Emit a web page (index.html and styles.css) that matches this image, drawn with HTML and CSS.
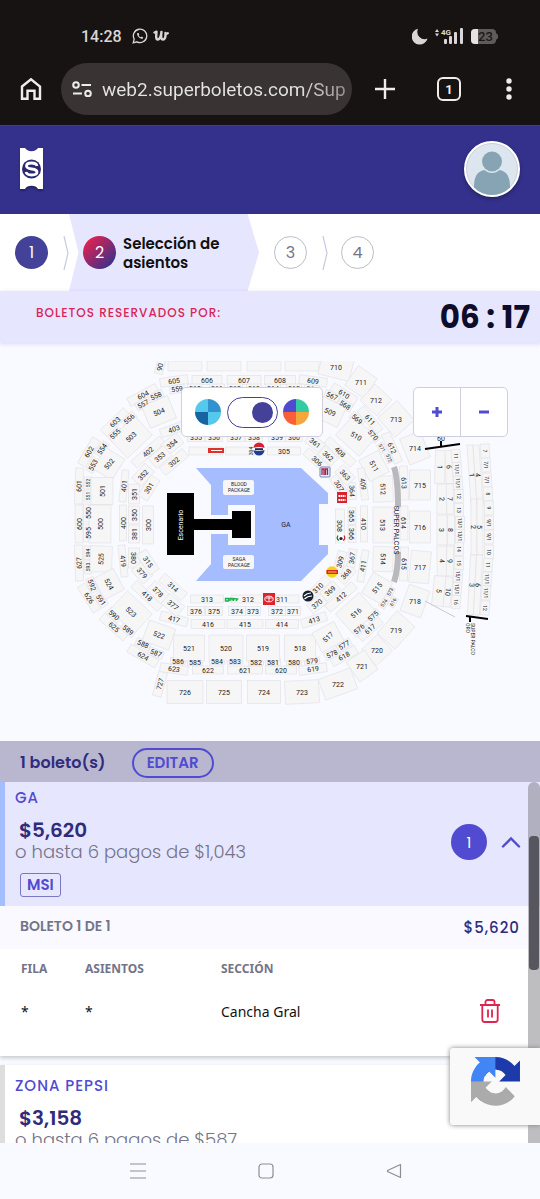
FILE: index.html
```html
<!DOCTYPE html>
<html lang="es">
<head>
  <meta charset="UTF-8" />
  <meta name="viewport" content="width=device-width, initial-scale=1.0"/>
  <title>Superboletos - Selección de asientos</title>
  <link rel="stylesheet" href="styles.css">
</head>
<body>

  <!-- Phone status bar and browser bar -->
  <div class="chrome">
    <div class="status">
      <span class="clock">14:28</span>
      <svg width="16" height="16" viewBox="0 0 16 16" fill="none" stroke="#d8d6d6" stroke-width="1.3">
        <path d="M1.2 14.8l1-3.7A6.7 6.7 0 1 1 5 13.8z"/>
        <path d="M5.3 5c-.5 1.200 0 2.900 1.500 4.300s3.200 1.900 4.100 1.200l.3-1.100-1.500-.8-.8.700c-1-.4-1.900-1.200-2.200-2.100l.6-.8-.7-1.500z" fill="#d8d6d6" stroke="none"/>
      </svg>
      <svg width="16" height="12" viewBox="0 0 16 12" fill="none" stroke="#d8d6d6" stroke-width="2.400" stroke-linecap="round" stroke-linejoin="round">
        <path d="M1.500 2.500l2-.8c-.2 3-1 7.800 1.200 7.800C7 9.500 8 5.500 8.500 2c-.5 3-.8 7.500 1.400 7.500 2.400 0 2.800-3.500 2.600-6.500 .8.800 1.600.8 2.300.2"/>
      </svg>
      <span class="status-right">
        <svg width="16" height="17" viewBox="0 0 16 17"><path d="M6 .8A8 8 0 1 0 15.500 10.500 7.300 7.300 0 0 1 6 .8z" fill="#d8d6d6"/></svg>
        <svg width="29" height="18" viewBox="0 0 29 18" fill="#d8d6d6">
          <path d="M0 5l2-3 2 3zM0 6.500h4l-2 3z"/>
          <text x="6" y="8" class="net">4G</text>
          <rect x="9" y="12" width="3" height="5" rx="1"/><rect x="14" y="9" width="3" height="8" rx="1"/>
          <rect x="19" y="5" width="3" height="12" rx="1"/><rect x="25" y="1" width="3" height="16" rx="1"/>
        </svg>
        <svg width="27" height="15" viewBox="0 0 27 15">
          <rect width="25" height="15" rx="4" fill="#5e5b5b"/><path d="M25 4l2 2v3l-2 2z" fill="#5e5b5b"/>
          <path d="M4 0h3v15H4a4 4 0 0 1-4-4V4a4 4 0 0 1 4-4z" fill="#e4e2e2"/>
          <text x="7" y="12" class="battery">23</text>
        </svg>
      </span>
    </div>
    <div class="browser">
      <button class="icon-btn" aria-label="Inicio">
        <svg width="22" height="24" viewBox="0 0 22 24" fill="none" stroke="#eeecec" stroke-width="2.400"><path d="M2 9.500L11 2.200l9 7.300v12.300h-5.500v-8h-7v8H2z"/></svg>
      </button>
      <div class="url">
        <svg width="20" height="16" viewBox="0 0 20 16" fill="none" stroke="#eeecec" stroke-width="2"><circle cx="4" cy="4" r="2.800"/><path d="M9.500 4H19M1 12.500h9"/><circle cx="16" cy="12.500" r="2.800"/></svg>
        <input type="text" aria-label="Dirección" value="web2.superboletos.com/Sup">
      </div>
      <button class="icon-btn" aria-label="Nueva pestaña">
        <svg width="22" height="22" viewBox="0 0 22 22" stroke="#eeecec" stroke-width="2.400"><path d="M11 1v20M1 11h20"/></svg>
      </button>
      <button class="tabs" aria-label="Pestañas">1</button>
      <button class="icon-btn" aria-label="Menú">
        <svg width="6" height="22" viewBox="0 0 6 22" fill="#eeecec"><circle cx="3" cy="3" r="2.700"/><circle cx="3" cy="11" r="2.700"/><circle cx="3" cy="19" r="2.700"/></svg>
      </button>
    </div>
  </div>

  <header class="header">
    <a href="#" class="logo" aria-label="Superboletos">
      <svg width="24" height="42" viewBox="0 0 24 42">
        <path d="M0 0h5a7 5 0 0 0 13 0h5v41h-5a7 5 0 0 0-13 0H0z" fill="#fff"/>
        <circle cx="11.500" cy="21" r="9.500" fill="#2b2870"/>
        <path d="M17 18c-.5-2.300-2.500-3-5.500-3s-5 1-5 3c0 4.500 10.500 1.500 10.500 6 0 2-2.200 3-5.300 3S6.500 26 6 24" fill="none" stroke="#fff" stroke-width="2.800"/>
      </svg>
    </a>
    <button class="avatar" aria-label="Mi cuenta">
      <svg width="52" height="52" viewBox="0 0 52 52">
        <circle cx="26" cy="26" r="25.500" fill="#dde6ee" stroke="#c9cdd9"/>
        <circle cx="26" cy="18.500" r="10" fill="#87a4b5"/>
        <path d="M8 44.500c0-10 2.500-16 10.500-17.500 4 4 11 4 15 0C41.500 28.500 44 34.500 44 44.500a25.500 25.500 0 0 1-36 0z" fill="#87a4b5"/>
      </svg>
    </button>
  </header>

  <div class="steps">
    <span class="circle done">1</span>
    <svg class="sep" width="6" height="34" viewBox="0 0 6 34"><path d="M1 0l4 17-4 17" fill="none" stroke="#c9c9de" stroke-width="1.200"/></svg>
    <div class="step-active">
      <span class="circle current">2</span>
      <span class="step-label">Selección de asientos</span>
    </div>
    <span class="circle">3</span>
    <svg class="sep" width="6" height="34" viewBox="0 0 6 34"><path d="M1 0l4 17-4 17" fill="none" stroke="#c9c9de" stroke-width="1.200"/></svg>
    <span class="circle">4</span>
  </div>

  <div class="timer">
    <span class="timer-label">BOLETOS RESERVADOS POR:</span>
    <span class="time">06 : 17</span>
  </div>

  <div class="map">
    <svg id="seatMap" viewBox="0 345 540 396"></svg>
    <div class="view-toggle">
      <svg width="26" height="26" viewBox="0 0 26 26"><path d="M13 13V0A13 13 0 0 0 0 13zM13 13v13a13 13 0 0 0 13-13z" fill="#55c8ee"/><path d="M13 13h13A13 13 0 0 0 13 0z" fill="#3093cf"/><path d="M13 13H0a13 13 0 0 0 13 13z" fill="#1664a0"/></svg>
      <input type="checkbox" class="switch" aria-label="Cambiar colores del mapa" checked>
      <svg width="26" height="26" viewBox="0 0 26 26"><path d="M13 13V0A13 13 0 0 0 0 13z" fill="#4f4ace"/><path d="M13 13h13A13 13 0 0 0 13 0z" fill="#34cba4"/><path d="M13 13v13a13 13 0 0 0 13-13z" fill="#f5a73c"/><path d="M13 13H0a13 13 0 0 0 13 13z" fill="#fa6038"/></svg>
    </div>
    <div class="zoom">
      <button aria-label="Acercar"><svg width="12" height="12" viewBox="0 0 12 12"><path d="M6 1v10M1 6h10" stroke="#504bd0" stroke-width="3"/></svg></button>
      <button aria-label="Alejar"><svg width="12" height="12" viewBox="0 0 12 12"><path d="M1 6h10" stroke="#504bd0" stroke-width="3"/></svg></button>
    </div>
  </div>

  <div class="cart-bar">
    <strong>1 boleto(s)</strong>
    <button class="edit">EDITAR</button>
  </div>

  <div class="list-wrap">
    <div class="list">
      <section class="zone open">
        <div class="zone-head">
          <div class="zone-info">
            <h2>GA</h2>
            <p class="price">$5,620</p>
            <p class="pays">o hasta 6 pagos de $1,043</p>
            <span class="msi">MSI</span>
          </div>
          <span class="count">1</span>
          <button class="collapse" aria-label="Ocultar">
            <svg width="20" height="12" viewBox="0 0 20 12"><path d="M2 10.500l8-8 8 8" fill="none" stroke="#504bd0" stroke-width="2.400" stroke-linecap="round"/></svg>
          </button>
        </div>
        <div class="ticket-head">
          <span class="ticket-num">BOLETO 1 DE 1</span>
          <span class="ticket-price">$5,620</span>
        </div>
        <table>
          <tr><th>FILA</th><th>ASIENTOS</th><th>SECCIÓN</th><th></th></tr>
          <tr>
            <td>*</td><td>*</td><td>Cancha Gral</td>
            <td class="del">
              <button aria-label="Eliminar">
                <svg width="20" height="24" viewBox="0 0 20 24" fill="none" stroke="#e0244f" stroke-width="1.800"><path d="M0 6h20M2.300 6v14.500a2.500 2.500 0 0 0 2.500 2.500h10.400a2.500 2.500 0 0 0 2.500-2.500V6M5.500 6V3A2 2 0 0 1 7.500 1h5a2 2 0 0 1 2 2v3M8 10.500v8M12 10.500v8"/></svg>
              </button>
            </td>
          </tr>
        </table>
      </section>
      <section class="zone">
        <div class="zone-head">
          <div class="zone-info">
            <h2>ZONA PEPSI</h2>
            <p class="price">$3,158</p>
            <p class="pays">o hasta 6 pagos de $587</p>
          </div>
        </div>
      </section>
    </div>
    <div class="scrollbar"><div class="thumb"></div></div>
    <div class="captcha">
      <svg width="49" height="49" viewBox="0 0 64 64">
        <path fill="#1c3aa9" d="M64 31.955l-.033-1.370V4.687l-7.160 7.160C50.900 4.674 42.033.093 32.097.093c-10.340 0-19.524 4.960-25.290 12.637l11.736 11.860a15.550 15.550 0 0 1 4.754-5.334c2.050-1.600 4.952-2.906 8.800-2.906.465 0 .824.054 1.087.157a15.530 15.530 0 0 1 11.945 7.164l-8.307 8.307L64 31.953"/>
        <path fill="#4285f4" d="M31.862.094l-1.370.033H4.594l7.160 7.160C4.580 13.147 0 22.014 0 31.950c0 10.340 4.960 19.524 12.637 25.290l11.860-11.736a15.550 15.550 0 0 1-5.334-4.754c-1.600-2.050-2.906-4.952-2.906-8.800 0-.465.054-.824.157-1.087a15.530 15.530 0 0 1 7.164-11.945l8.307 8.307L31.860.095"/>
        <path fill="#ababab" d="M.001 31.955l.033 1.370v25.898l7.160-7.160c5.860 7.173 14.727 11.754 24.664 11.754 10.340 0 19.524-4.960 25.290-12.637l-11.736-11.860a15.550 15.550 0 0 1-4.754 5.334c-2.050 1.600-4.952 2.906-8.800 2.906-.465 0-.824-.054-1.087-.157a15.530 15.530 0 0 1-11.945-7.164l8.307-8.307L0 31.957"/>
      </svg>
    </div>
  </div>

  <nav class="phone-nav">
    <button aria-label="Recientes"><svg width="16" height="16" viewBox="0 0 16 16" fill="none" stroke="#8d8d95" stroke-width="1.200"><path d="M0 1h16M0 8h16M0 15h16"/></svg></button>
    <button aria-label="Inicio del teléfono"><svg width="16" height="16" viewBox="0 0 16 16" fill="none" stroke="#8d8d95" stroke-width="1.200"><rect x="1" y="1" width="14" height="14" rx="3"/></svg></button>
    <button aria-label="Atrás"><svg width="16" height="16" viewBox="0 0 16 16" fill="none" stroke="#8d8d95" stroke-width="1.200" stroke-linejoin="round"><path d="M14.500 1.500v13L1.500 8.500V7.500z"/></svg></button>
  </nav>

  <script src="map.js"></script>
</body>
</html>
```
FILE: styles.css
```css
:root {
  --brand: #34318c;
  --accent: #504bd0;
  --lilac: #e6e6ff;
  --page: #f9faff;
  --gray: #747489;
  --pink: #dc2458;
}
* {
  box-sizing: border-box;
}
body {
  margin: 0;
  height: 100vh;
  display: flex;
  flex-direction: column;
  font-family: 'Poppins', 'Inter', sans-serif;
  background: var(--page);
  color: #111;
}
button {
  padding: 0;
  border: none;
  background: none;
  font-family: inherit;
  cursor: pointer;
}
svg {
  display: block;
  flex-shrink: 0;
}

/* phone and browser bars */
.chrome {
  background: #171312;
  border-bottom: 1px solid #4a4646;
  padding: 24px 20px 10px;
  font-family: Roboto, sans-serif;
}
.status {
  display: flex;
  align-items: center;
  gap: 5px;
  height: 24px;
  padding: 0 22px 0 61px;
}
.clock {
  font-size: 16px;
  font-weight: 500;
  color: #d8d6d6;
  margin-right: 5px;
}
.status-right {
  display: flex;
  align-items: center;
  gap: 7px;
  margin-left: auto;
}
.net {
  font-size: 8px;
  font-weight: 700;
}
.battery {
  font-size: 13px;
  font-weight: 500;
  fill: #1c1818;
}
.browser {
  display: flex;
  align-items: center;
  margin-top: 15px;
  padding-right: 8px;
}
.url {
  flex: 1;
  min-width: 0;
  display: flex;
  align-items: center;
  gap: 10px;
  height: 52px;
  margin: 0 22px 0 19px;
  padding: 0 4px 0 11px;
  border-radius: 26px;
  background: #393433;
}
.url input {
  flex: 1;
  min-width: 0;
  padding: 0;
  border: none;
  outline: none;
  font-family: Roboto, sans-serif;
  font-size: 19px;
  color: transparent;
  background: linear-gradient(90deg, #e6e4e4 80%, #8e8a89);
  background-clip: text;
  -webkit-background-clip: text;
}
.icon-btn, .tabs {
  flex-shrink: 0;
}
.tabs {
  width: 24px;
  height: 24px;
  margin: 0 45px 0 41px;
  border: 2px solid #eeecec;
  border-radius: 6px;
  font-family: Roboto, sans-serif;
  font-size: 13px;
  font-weight: 700;
  color: #eeecec;
}

.header {
  display: flex;
  align-items: center;
  justify-content: space-between;
  height: 88px;
  padding: 0 20px 2px;
  background: var(--brand);
}
.logo svg {
  filter: drop-shadow(0 2px 1px rgba(0, 0, 0, 0.3));
}
.avatar {
  border: 2px solid #fff;
  border-radius: 50%;
  background: #fff;
  box-shadow: 0 2px 4px rgba(0, 0, 0, 0.3);
}

/* steps */
.steps {
  display: flex;
  align-items: center;
  height: 77px;
  padding-left: 15px;
  background: #fff;
}
.circle {
  display: flex;
  align-items: center;
  justify-content: center;
  width: 33px;
  height: 33px;
  border: 1px solid #bcbccd;
  border-radius: 50%;
  font-size: 16px;
  color: var(--gray);
}
.circle.done {
  border: none;
  background: #444199;
  color: #fff;
}
.circle.current {
  border: none;
  background: linear-gradient(135deg, #e8214f 10%, #34318c 90%);
  color: #fff;
}
.sep {
  margin: 0 13px 0 15px;
}
.done + .sep {
  margin-right: 0;
}
.step-active {
  display: flex;
  align-items: center;
  gap: 7px;
  width: 190px;
  height: 100%;
  margin-right: 15px;
  padding: 0 24px 0 14px;
  background: var(--lilac);
  clip-path: polygon(0 0, 94% 0, 100% 50%, 94% 100%, 0 100%, 5% 50%);
}
.step-active .circle {
  flex-shrink: 0;
}
.step-label {
  font-size: 15px;
  line-height: 19px;
  font-weight: 600;
}

.timer {
  position: relative;
  z-index: 1;
  display: flex;
  align-items: center;
  justify-content: space-between;
  height: 52px;
  padding: 0 10px 0 36px;
  background: var(--lilac);
  box-shadow: 0 1px 4px rgba(80, 75, 208, 0.2);
}
.timer-label {
  padding-bottom: 8px;
  font-size: 12px;
  font-weight: 500;
  letter-spacing: 1px;
  color: var(--pink);
}
.time {
  font-size: 31px;
  font-weight: 700;
  color: #0e0c2b;
}

/* seat map */
.map {
  position: relative;
  padding-top: 2px;
}
#seatMap {
  width: 100%;
  font-family: Roboto, sans-serif;
}
.seat {
  fill: #f6f6f7;
  stroke: #dfdfe5;
  stroke-width: 0.6;
}
.label {
  font-size: 7px;
  fill: #222;
  text-anchor: middle;
}
.label.small {
  font-size: 5px;
}
.label.light {
  fill: #fff;
}
.view-toggle, .zoom {
  position: absolute;
  top: 44px;
  height: 50px;
  display: flex;
  background: #fff;
  border: 1px solid #cfcfdf;
  border-radius: 5px;
}
.view-toggle {
  left: 50%;
  width: 142px;
  margin-left: -89px;
  align-items: center;
  justify-content: space-between;
  padding: 0 13px;
}
.switch {
  appearance: none;
  width: 51px;
  height: 31px;
  margin: 0;
  padding: 4px;
  border: 1px solid #444199;
  border-radius: 16px;
  background: #fff;
  cursor: pointer;
}
.switch::before {
  content: '';
  display: block;
  width: 21px;
  height: 21px;
  border-radius: 50%;
  background: #444199;
}
.switch:checked::before {
  margin-left: auto;
}
.zoom {
  right: 32px;
  width: 95px;
}
.zoom button {
  flex: 1;
  display: flex;
  align-items: center;
  justify-content: center;
}
.zoom button + button {
  border-left: 1px solid #cfcfdf;
}

/* cart */
.cart-bar {
  display: flex;
  align-items: center;
  gap: 26px;
  height: 41px;
  padding: 2px 20px 0;
  background: #b8b7cf;
}
.cart-bar strong {
  font-size: 16px;
  font-weight: 600;
  color: #2f2c7c;
}
.edit {
  height: 30px;
  padding: 0 13px;
  border: 2px solid var(--accent);
  border-radius: 15px;
  font-size: 15px;
  font-weight: 600;
  color: var(--accent);
}
.list-wrap {
  position: relative;
  flex: 1;
  min-height: 0;
}
.list {
  height: 100%;
  overflow: hidden;
}
.zone {
  margin-bottom: 9px;
  background: #fff;
  box-shadow: 0 2px 4px rgba(0, 0, 0, 0.2);
}
.zone-head {
  display: flex;
  align-items: center;
  padding: 10px 19px 9px 10px;
  border-left: 5px solid #dedede;
}
.open .zone-head {
  padding-top: 5px;
  border-left-color: #a4bdfd;
  background: var(--lilac);
}
.zone-info {
  flex: 1;
}
.zone h2 {
  margin: 0 0 9px;
  font-size: 15px;
  line-height: 22px;
  font-weight: 500;
  letter-spacing: 1px;
  color: var(--accent);
}
.zone p {
  margin: 0;
}
.price {
  padding-left: 4px;
  font-size: 20px;
  line-height: 24px;
  font-weight: 600;
  color: #2f2c7c;
}
.pays {
  font-size: 18px;
  line-height: 20px;
  font-weight: 300;
  color: var(--gray);
}
.msi {
  display: inline-block;
  margin: 11px 0 0 5px;
  padding: 0 6px;
  border: 1px solid #7a77c4;
  border-radius: 3px;
  font-size: 15px;
  line-height: 22px;
  font-weight: 600;
  color: var(--accent);
}
.count {
  display: flex;
  align-items: center;
  justify-content: center;
  width: 36px;
  height: 36px;
  margin-right: 14px;
  border-radius: 50%;
  background: var(--accent);
  font-size: 15px;
  color: #fff;
}
.ticket-head {
  display: flex;
  align-items: center;
  justify-content: space-between;
  height: 43px;
  padding: 0 20px;
  background: #f9f9ff;
}
.ticket-num {
  padding-bottom: 3px;
  font-size: 14px;
  font-weight: 600;
  color: var(--gray);
}
.ticket-price {
  font-size: 15px;
  font-weight: 500;
  letter-spacing: 1px;
  color: #2f2c7c;
}
table {
  width: 100%;
  border-collapse: collapse;
  font-family: 'Noto Sans', sans-serif;
  text-align: left;
}
th, td {
  padding: 0;
}
th {
  height: 38px;
  font-size: 12px;
  font-weight: 700;
  color: var(--gray);
}
td {
  height: 69px;
  padding-bottom: 21px;
  font-size: 14px;
}
tr > :first-child {
  width: 85px;
  padding-left: 21px;
}
tr > :nth-child(2) {
  width: 136px;
}
.del {
  padding-right: 40px;
}
.del button {
  display: block;
  margin-left: auto;
}
.scrollbar {
  position: absolute;
  top: 0;
  right: 0;
  bottom: 0;
  width: 12px;
  padding-top: 54px;
  border-radius: 6px 6px 0 0;
  background: rgba(110, 110, 118, 0.45);
}
.thumb {
  width: 10px;
  height: 134px;
  margin: 0 auto;
  border-radius: 4px;
  background: #57565e;
}
.captcha {
  position: absolute;
  right: 0;
  bottom: 18px;
  width: 90px;
  height: 77px;
  padding: 9px 0 0 21px;
  border-radius: 3px 0 0 3px;
  background: #f9f9f9;
  box-shadow: 0 0 5px #808080;
}

.phone-nav {
  position: relative;
  display: flex;
  align-items: center;
  justify-content: center;
  gap: 112px;
  height: 56px;
  padding-right: 9px;
  background: var(--page);
}
```
FILE: map.js
```js
// label, x, y, box width, box height, box angle, text angle (same as the box if left out)
const sections = [
  // level 700
  ['90', 160, 367, 14, 8, -75, -80], ['', 185, 366, 34, 10, 0], ['', 224, 366, 34, 10, 0], ['', 264, 366, 34, 10, 0], ['', 302, 366, 34, 10, 0],
  ['710', 336, 367, 32, 22, 14, 0], ['711', 361, 382, 23, 24, 35, 0], ['712', 376, 400, 23, 22, 43, 0],
  ['713', 396, 419, 26, 26, 48, 0], ['714', 415, 448, 28, 22, 68, 0], ['715', 420, 485, 30, 21, 90, 0],
  ['716', 420, 527, 32, 21, 90, 0], ['717', 420, 567, 32, 20, 95, 0], ['718', 415, 601, 28, 22, -70, 0],
  ['719', 396, 630, 30, 24, -48, 0], ['720', 377, 650, 22, 22, -43, 0], ['721', 362, 666, 22, 24, -35, 0],
  ['722', 338, 684, 34, 22, -20, 0], ['723', 302, 692, 34, 23, -3, 0], ['724', 264, 692, 33, 23, 0],
  ['725', 224, 692, 35, 23, 0], ['726', 185, 692, 36, 23, 0], ['727', 160, 684, 25, 9, -75],
  // level 600
  ['605', 174, 381, 28, 9, -8], ['606', 207, 380, 30, 9, 0], ['607', 244, 380, 34, 9, 0], ['608', 280, 380, 31, 9, 0],
  ['609', 313, 381, 28, 9, 8], ['610', 344, 394, 28, 9, 32], ['611', 370, 420, 30, 9, 50], ['612', 392, 448, 32, 9, 66],
  ['613', 404, 483, 34, 8, 88], ['614', 404, 523, 34, 8, 90], ['615', 404, 564, 34, 8, 92],
  ['604', 143, 395, 32, 9, -28], ['603', 115, 422, 32, 9, -44], ['602', 89, 452, 30, 9, -60], ['601', 79, 486, 36, 8, -88],
  ['600', 79, 524, 38, 8, -90], ['627', 79, 563, 36, 8, -92], ['626', 89, 598, 30, 9, 58], ['625', 114, 627, 32, 9, 42],
  ['624', 143, 656, 32, 9, 30], ['623', 174, 669, 28, 9, 8], ['622', 208, 670, 31, 8, 0], ['621', 245, 670, 35, 8, 0],
  ['620', 281, 670, 31, 8, 0], ['619', 313, 669, 28, 9, -8], ['618', 344, 656, 28, 9, -28], ['617', 370, 629, 28, 9, -42],
  // boxes 550 - 595
  ['560', 195, 388, 15, 8, 0], ['561', 217, 388, 15, 8, 0], ['562', 235, 388, 15, 8, 0], ['563', 254, 388, 15, 8, 0],
  ['564', 273, 388, 15, 8, 0], ['565', 294, 388, 15, 8, 0], ['566', 312, 389, 15, 8, 6],
  ['559', 177, 389, 15, 8, -8], ['558', 156, 396, 15, 8, -25], ['557', 143, 404, 15, 8, -28], ['556', 129, 419, 15, 8, -42],
  ['555', 115, 434, 15, 8, -44], ['554', 102, 449, 15, 8, -56], ['553', 93, 465, 15, 8, -62], ['552', 88, 483, 12, 8, -90, -90, 1],
  ['551', 88, 496, 12, 8, -90, -90, 1], ['550', 88, 513, 18, 9, -90], ['595', 88, 533, 18, 9, -90], ['594', 88, 553, 14, 8, -90, -90, 1],
  ['593', 88, 567, 14, 8, -90, -90, 1], ['592', 92, 585, 15, 8, 70], ['591', 101, 600, 15, 8, 55], ['590', 114, 615, 15, 8, 42],
  ['589', 128, 630, 15, 8, 38], ['588', 143, 644, 15, 8, 25], ['587', 156, 653, 15, 8, 20],
  ['586', 178, 661, 15, 7, 0], ['585', 195, 662, 15, 7, 0], ['584', 217, 661, 15, 7, 0], ['583', 235, 661, 15, 7, 0],
  ['582', 256, 662, 15, 7, 0], ['581', 273, 662, 15, 7, 0], ['580', 294, 662, 15, 7, 0], ['579', 312, 661, 15, 7, -5],
  ['578', 332, 654, 15, 8, -25], ['577', 344, 645, 15, 8, -30], ['576', 359, 629, 15, 8, -42], ['575', 373, 616, 15, 8, -45],
  ['574', 384, 603, 10, 7, -55, -55, 1], ['573', 390, 592, 10, 7, -65, -65, 1], ['616', 393, 602, 10, 7, -60, -60, 1],
  ['567', 332, 396, 15, 8, 25], ['568', 345, 405, 15, 8, 32], ['569', 357, 419, 15, 8, 42], ['570', 373, 435, 15, 8, 48],
  ['571', 382, 448, 10, 7, 60, 60, 1], ['572', 389, 458, 10, 7, 66, 66, 1],
  // level 500
  ['504', 159, 412, 28, 24, -22], ['503', 131, 437, 34, 26, -43], ['502', 109, 464, 25, 22, -58, -50], ['501', 102, 491, 27, 22, -90],
  ['500', 100, 524, 38, 22, -90], ['525', 101, 559, 26, 22, -88], ['524', 109, 584, 24, 22, 62], ['523', 131, 612, 34, 26, 43],
  ['522', 159, 635, 28, 22, 20], ['521', 189, 648, 31, 26, 0], ['520', 226, 648, 34, 26, 0], ['519', 263, 648, 33, 26, 0],
  ['518', 300, 648, 31, 26, 0], ['517', 328, 637, 25, 22, -28, -45], ['516', 356, 613, 32, 26, -42], ['515', 377, 588, 24, 22, -60, -50],
  ['514', 383, 559, 25, 20, 92], ['513', 383, 525, 36, 20, 90], ['512', 383, 489, 26, 20, 88], ['511', 374, 466, 24, 22, 62],
  ['510', 356, 436, 32, 26, 42, 30], ['509', 330, 412, 26, 22, 25],
  // level 400
  ['403', 174, 429, 28, 9, -20], ['402', 148, 452, 38, 9, -42], ['401', 124, 486, 32, 7, -84], ['400', 123, 523, 36, 7, -90],
  ['419', 123, 561, 32, 7, 84], ['418', 147, 596, 36, 9, 43], ['417', 174, 619, 28, 9, 15], ['416', 208, 624, 34, 9, 0],
  ['415', 245, 624, 36, 9, 0], ['414', 282, 624, 33, 9, 0], ['413', 314, 620, 26, 9, -18], ['412', 341, 597, 36, 9, -42],
  ['411', 363, 566, 32, 7, -80], ['410', 364, 524, 36, 7, 90], ['409', 363, 484, 32, 7, 82], ['408', 340, 452, 36, 9, 43],
  // level 350
  ['354', 172, 444, 20, 13, -38], ['353', 160, 457, 20, 13, -40], ['352', 143, 475, 20, 13, -48], ['351', 134, 494, 20, 11, -90],
  ['350', 134, 515, 18, 11, -90], ['381', 134, 534, 18, 11, -90], ['380', 134, 558, 20, 11, 90], ['379', 142, 573, 18, 13, 48],
  ['378', 158, 592, 20, 13, 45], ['377', 173, 605, 20, 13, 40], ['376', 196, 611, 17, 9, 0], ['375', 214, 611, 17, 9, 0],
  ['374', 237, 611, 17, 9, 0], ['373', 253, 611, 15, 9, 0], ['372', 277, 611, 17, 9, 0], ['371', 293, 611, 15, 9, 0],
  ['370', 317, 604, 18, 11, -38], ['369', 330, 591, 18, 11, -42], ['368', 346, 574, 18, 12, -48], ['367', 352, 558, 18, 8, -82],
  ['366', 352, 534, 17, 8, 90], ['365', 352, 516, 17, 8, 90], ['364', 352, 491, 17, 8, 88], ['363', 345, 475, 18, 12, 48],
  ['362', 328, 456, 18, 11, 42], ['361', 315, 443, 18, 11, 38],
  ['355', 196, 437, 17, 9, 0], ['356', 214, 437, 17, 9, 0], ['357', 236, 437, 17, 9, 0], ['358', 254, 437, 17, 9, 0],
  ['359', 277, 437, 17, 9, 0], ['360', 294, 437, 17, 9, 0],
  // level 300
  ['302', 174, 462, 30, 10, -40], ['301', 149, 488, 24, 11, -58], ['300', 148, 525, 38, 11, -90], ['315', 148, 562, 24, 11, 56],
  ['314', 173, 587, 30, 10, 42], ['313', 207, 599, 33, 8, 0], ['312', 248, 599, 34, 8, 0], ['311', 282, 599, 34, 8, 0],
  ['310', 318, 588, 28, 9, -45], ['309', 340, 562, 22, 9, -75], ['308', 340, 526, 34, 9, 90], ['307', 339, 486, 22, 9, 58],
  ['306', 317, 461, 30, 9, 42], ['305', 284, 451, 33, 8, 0], ['', 206, 451, 34, 8, 0], ['', 242, 451, 33, 8, 0], ['304', 251, 451, 0, 0, 0, -90, 1],
  // suites on the right
  ['1', 440, 467, 33, 10, 92], ['2', 442, 499, 30, 10, 91], ['3', 442, 530, 30, 10, 90], ['4', 442, 561, 30, 10, 89], ['5', 439, 591, 30, 12, 96],
  ['6', 449, 467, 33, 7, 88], ['7', 450, 499, 30, 7, 89], ['8', 451, 530, 30, 7, 90], ['9', 450, 561, 30, 7, 91], ['10', 448, 592, 30, 7, 96],
  ['11', 456, 456, 13, 9, 86, 90, 1], ['11/1', 457, 469, 13, 9, 87, 90, 1], ['11/1', 458, 483, 13, 9, 88, 90, 1],
  ['12', 459, 496, 13, 9, 89, 90, 1], ['13', 459, 510, 13, 9, 90, 90, 1], ['13/1', 460, 523, 13, 9, 90, 90, 1], ['13/1', 460, 536, 13, 9, 90, 90, 1],
  ['14', 459, 549, 13, 9, 91, 90, 1], ['15', 459, 563, 13, 9, 92, 90, 1], ['15/1', 458, 576, 13, 9, 93, 90, 1],
  ['15/1', 457, 589, 13, 9, 94, 90, 1], ['16', 456, 602, 13, 9, 95, 90, 1],
  ['1', 472, 475, 60, 6, 86], ['2', 474, 527, 56, 6, 90], ['3', 472, 585, 60, 6, 93],
  ['4', 478, 475, 60, 6, 86], ['5', 480, 527, 56, 6, 90], ['6', 478, 585, 60, 6, 93],
  ['7', 485, 451, 14, 9, 86, 90, 1], ['7/1', 486, 465, 14, 9, 86, 90, 1], ['7/1', 487, 480, 14, 9, 87, 90, 1],
  ['8', 488, 494, 14, 9, 88, 90, 1], ['9', 489, 508, 14, 9, 89, 90, 1], ['9/1', 489, 523, 14, 9, 90, 90, 1], ['9/1', 489, 537, 14, 9, 90, 90, 1],
  ['10', 489, 552, 14, 9, 91, 90, 1], ['11', 488, 565, 13, 9, 92, 90, 1], ['11/1', 487, 579, 14, 9, 93, 90, 1],
  ['11/1', 486, 593, 14, 9, 94, 90, 1], ['12', 485, 608, 14, 9, 95, 90, 1]
];

function drawBox([label, x, y, w, h, angle]) {
  return `<rect class="seat" x="${x - w / 2}" y="${y - h / 2}" width="${w}" height="${h}" transform="rotate(${angle} ${x} ${y})"/>`;
}

function drawLabel([label, x, y, w, h, angle, textAngle = angle, small]) {
  if (!label) return '';
  return `<text class="label ${small ? 'small' : ''}" x="${x}" y="${y}" dy="0.36em" transform="rotate(${textAngle} ${x} ${y})">${label}</text>`;
}

const field = `
  <path d="M196 468h105l27 25v11h-9v41h9v9l-27 27H196l15-17v-30h17v11h27v-40h-27v10h-17v-30z" fill="#a5bdfe"/>
  <path d="M167 493h27v26h38v-8h19v27h-19v-8h-38v25h-27z" fill="#000"/>
  <text class="label light" transform="translate(183 525) rotate(-90)">Escenario</text>
  <rect x="223" y="480" width="31" height="15" rx="2" fill="#f6f6f8"/>
  <text class="label small" x="239" y="486">BLOOD</text><text class="label small" x="239" y="492">PACKAGE</text>
  <rect x="223" y="555" width="31" height="14" rx="2" fill="#f6f6f8"/>
  <text class="label small" x="239" y="561">SAGA</text><text class="label small" x="239" y="567">PACKAGE</text>
  <text class="label" x="286" y="527">GA</text>`;

const palcos = `
  <path d="M394 467q4 12 4 40M398 552q0 18-4 30" fill="none" stroke="#b9b9bd" stroke-width="6"/>
  <text class="label" transform="translate(394 530) rotate(90)">SUPER PALCOS</text>
  <path d="M425 449l35-5M441 446v-5" stroke="#000" stroke-width="2"/>
  <path d="M466 616l22 3M470 617v5" stroke="#000" stroke-width="2"/>
  <text class="label" x="441" y="441">60</text>
  <path d="M425 601l30 16" stroke="#c9c9cf" stroke-width="1"/>
  <text class="label small" transform="translate(471 639) rotate(90)">SUPER PALCO</text>
  <text class="label small" transform="translate(466 628) rotate(90)">ORO</text>`;

// sponsors
const logos = `
  <rect x="208" y="448" width="16" height="5" fill="#e0302b"/><path d="M211 450.500h11" stroke="#fff" stroke-width="1"/>
  <circle cx="259" cy="449" r="5.500" fill="#fff"/><path d="M253.500 448a5.500 5.500 0 0 1 11 0q-5-2-11 0z" fill="#d92231"/><path d="M253.500 450a5.500 5.500 0 0 0 11 0q-5 2-11 0z" fill="#1c3f94"/><path d="M255 449.200h8" stroke="#22284c" stroke-width="2"/>
  <rect x="320" y="467" width="10" height="10" rx="1" fill="#e9f0fb" stroke="#3a5a9a" stroke-width="0.700"/><path d="M322 475v-6h2v6M325.500 475v-6h2v6" stroke="#a52048" stroke-width="1.300" fill="none"/>
  <rect x="337" y="492" width="10" height="11" fill="#d8232c"/><path d="M338.500 496h7M338.500 500h7" stroke="#fff" stroke-width="1.800" stroke-dasharray="1.500 0.500"/>
  <circle cx="341" cy="538" r="4.500" fill="#fff"/><path d="M338 535.500q-2 3 1 5" fill="none" stroke="#1b7a43" stroke-width="1.300"/><path d="M344 535.500q2 3-1 5" fill="none" stroke="#c82630" stroke-width="1.300"/><circle cx="341" cy="538.500" r="1.600" fill="#222"/>
  <circle cx="332" cy="572" r="5.800" fill="#f6d21c"/><rect x="326.500" y="570" width="11.500" height="4" fill="#d8262b"/><path d="M328 572h8.500" stroke="#f6d21c" stroke-width="1"/>
  <circle cx="308" cy="596" r="5.500" fill="#17202e"/><path d="M304 596q3-3 7-3M304.500 599q3-3 7.500-3" stroke="#fff" stroke-width="1.200" fill="none"/>
  <rect x="263" y="593" width="12" height="12" fill="#e0222e"/><ellipse cx="269" cy="599" rx="4.200" ry="2.800" fill="none" stroke="#fff" stroke-width="0.900"/><path d="M265.500 598h7M269 596.500v5" stroke="#fff" stroke-width="0.900"/>
  <path d="M225.500 598.500h3v2.500h-3zM230 601v-2.500h2v2M233.500 601v-2.500l4 .5-1.500 2" fill="none" stroke="#1eae4c" stroke-width="1.400"/>`;

document.getElementById('seatMap').innerHTML = `
  <clipPath id="mapEdge"><rect x="0" y="361" width="540" height="380"/></clipPath>
  <g clip-path="url(#mapEdge)">
    ${sections.map(drawBox).join('')}
    ${sections.map(drawLabel).join('')}
    ${field}${palcos}${logos}
  </g>`;
```
